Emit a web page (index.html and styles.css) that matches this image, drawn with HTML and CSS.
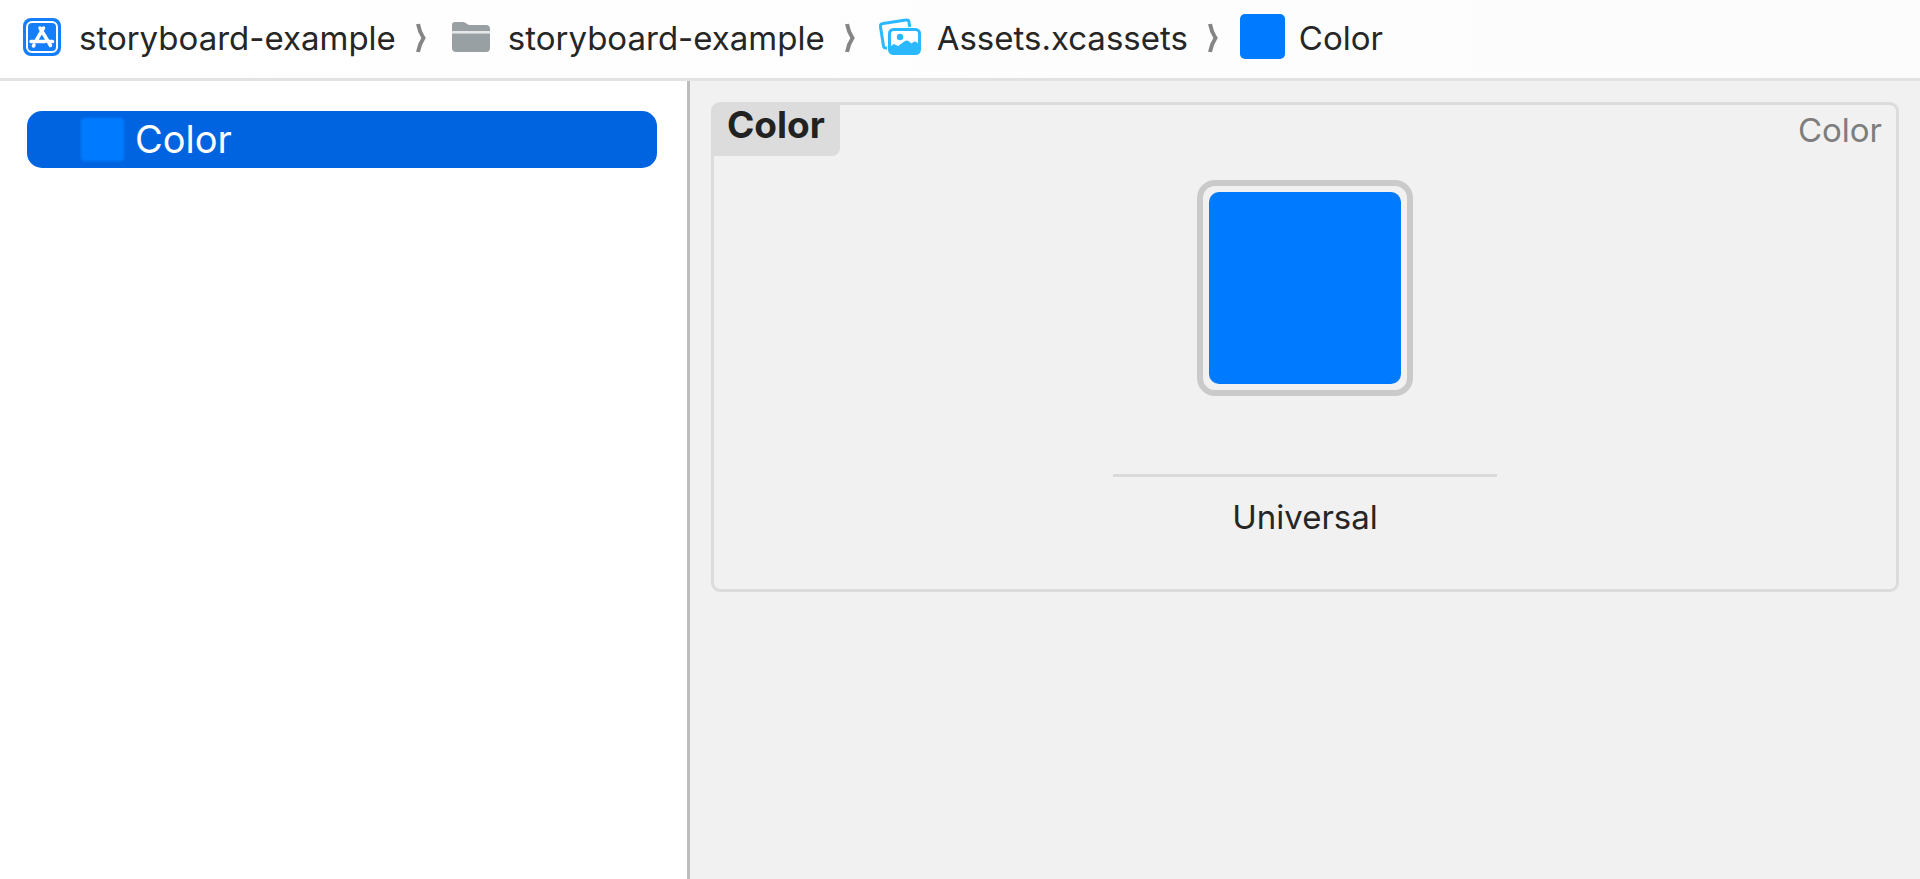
FILE: index.html
```
<!DOCTYPE html>
<html lang="en">
<head>
<meta charset="UTF-8">
<title>Assets.xcassets</title>
<link rel="stylesheet" href="styles.css">
</head>
<body>
<nav class="jumpbar">
	<a class="crumb" href="#project">
		<svg class="icon" width="38" height="38" viewBox="0 0 38 38">
			<rect width="38" height="38" rx="8" fill="#147efb"/>
			<rect x="4" y="4" width="30" height="30" rx="5" fill="none" stroke="#fff" stroke-width="2"/>
			<g fill="none" stroke="#fff" stroke-width="3.500" stroke-linecap="round">
				<path d="M20.500 10L12.700 23.500M17 10l10.500 17.500M8 23.500h14M26 23.500h3.500M11 27l-.6 1"/>
			</g>
		</svg>
		<span class="label">storyboard-example</span>
	</a>
	<svg class="chevron" width="10" height="30" viewBox="0 0 10 30"><path d="M2 1Q3.500 9 7.500 15Q3.500 21 2 29"/></svg>
	<a class="crumb" href="#group">
		<svg class="icon" width="38" height="38" viewBox="0 0 38 38">
			<path d="M0 13V7q0-3 3-3h8q2 0 3.500 1.500T18 7h16q4 0 4 4v2z" fill="#98a0a3"/>
			<path d="M0 13h38v2.500H0z" fill="#e4e6e7"/>
			<path d="M0 15.500h38V30q0 4-4 4H4q-4 0-4-4z" fill="#98a0a3"/>
		</svg>
		<span class="label">storyboard-example</span>
	</a>
	<svg class="chevron" width="10" height="30" viewBox="0 0 10 30"><path d="M2 1Q3.500 9 7.500 15Q3.500 21 2 29"/></svg>
	<a class="crumb assets" href="#assets">
		<svg class="icon" width="42" height="38" viewBox="0 0 42 38">
			<path d="M8 30q-3 .5-3.500-2L1.500 9q-.5-3 2.500-3.500L27 2q2.500-.5 3 2l.7 5" fill="none" stroke="#2ab8ff" stroke-width="3"/>
			<rect x="10.500" y="11.500" width="30" height="24" rx="4" fill="#fff" stroke="#2ab8ff" stroke-width="3"/>
			<circle cx="21" cy="19" r="3.200" fill="#2ab8ff"/>
			<path d="M11 29l3-2.500q1-.8 2 0l3 1.500 7-5q2-1 3.500 0l3 2.500 2-1.500q1.500-1 3 0l2 2v8q0 2-2 2H13q-2 0-2-2z" fill="#2ab8ff"/>
		</svg>
		<span class="label">Assets.xcassets</span>
	</a>
	<svg class="chevron" width="10" height="30" viewBox="0 0 10 30"><path d="M2 1Q3.500 9 7.500 15Q3.500 21 2 29"/></svg>
	<a class="crumb" href="#color">
		<span class="chip"></span>
		<span class="label">Color</span>
	</a>
</nav>

<div class="editor">
	<aside class="outline">
		<button class="item" type="button"><span class="chip"></span>Color</button>
	</aside>

	<main class="detail">
		<section class="set">
			<div class="set-head">
				<h2 class="set-name">Color</h2>
				<span class="set-kind">Color</span>
			</div>
			<div class="slot">
				<button class="well" type="button" aria-label="Universal"><span class="fill"></span></button>
				<div class="slot-name">Universal</div>
			</div>
		</section>
	</main>
</div>
</body>
</html>
```
FILE: styles.css
```
*{
	box-sizing:border-box;
}
body{
	margin:0;
	min-height:100vh;
	display:flex;
	flex-direction:column;
	font-family:Inter, "Liberation Sans", sans-serif;
	font-size:33px;
	line-height:40px;
	color:#262626;
	background:#FFF;
}
h2{
	margin:0;
}
button{
	font:inherit;
	border:0;
	background:none;
	cursor:pointer;
}
.jumpbar{
	display:flex;
	align-items:center;
	gap:20px;
	padding:14px 23px 19px;
	white-space:nowrap;
	background:linear-gradient(to right, #FFF, #FCFCFC);
	border-bottom:3px solid #E2E2E2;
}
.crumb{
	display:flex;
	align-items:center;
	gap:18px;
	color:inherit;
	text-decoration:none;
}
.label{
	padding-top:3px;
}
.chevron + .crumb{
	margin-left:6px;
}
.chevron + .assets{
	margin-left:4px;
	gap:16px;
}
.crumb .chip{
	margin:0 -4px;
}
.icon,
.chevron,
.chip{
	flex:none;
}
.chevron{
	margin-top:2px;
	fill:none;
	stroke:#858585;
	stroke-width:4;
}
.chip{
	width:45px;
	height:45px;
	border-radius:5px;
	background:#007AFF;
}
.editor{
	flex:1;
	display:grid;
	grid-template-columns:23fr 41fr;
}
.outline{
	padding:30px 30px 30px 27px;
	border-right:3px solid #BDBDBD;
}
.item{
	width:100%;
	display:flex;
	align-items:center;
	gap:10px;
	padding:6px 53px;
	font-size:38px;
	line-height:45px;
	color:#FFF;
	background:#0064E1;
	border-radius:15px;
}
.item .chip{
	border:2px solid #0071EE;
}
.detail{
	padding:21px;
	background:#F1F1F1;
}
.set{
	border:3px solid #DCDCDC;
	border-radius:9px;
	padding-bottom:52px;
}
.set-head{
	display:flex;
	justify-content:space-between;
	align-items:flex-start;
}
.set-name{
	padding:0 15px 11px 13px;
	font-size:37px;
	line-height:40px;
	color:#222;
	background:#DCDCDC;
	border-radius:0 0 8px 0;
}
.set-kind{
	padding:5px 14px 0;
	color:#7D7D7D;
}
.slot{
	display:flex;
	flex-direction:column;
	align-items:center;
	padding-top:24px;
}
.well{
	padding:6px;
	border:6px solid #CACACA;
	border-radius:18px;
}
.fill{
	display:block;
	width:192px;
	height:192px;
	border-radius:10px;
	background:#007AFF;
}
.slot-name{
	width:384px;
	margin-top:78px;
	padding-top:20px;
	text-align:center;
	border-top:3px solid #DADADA;
}
```
